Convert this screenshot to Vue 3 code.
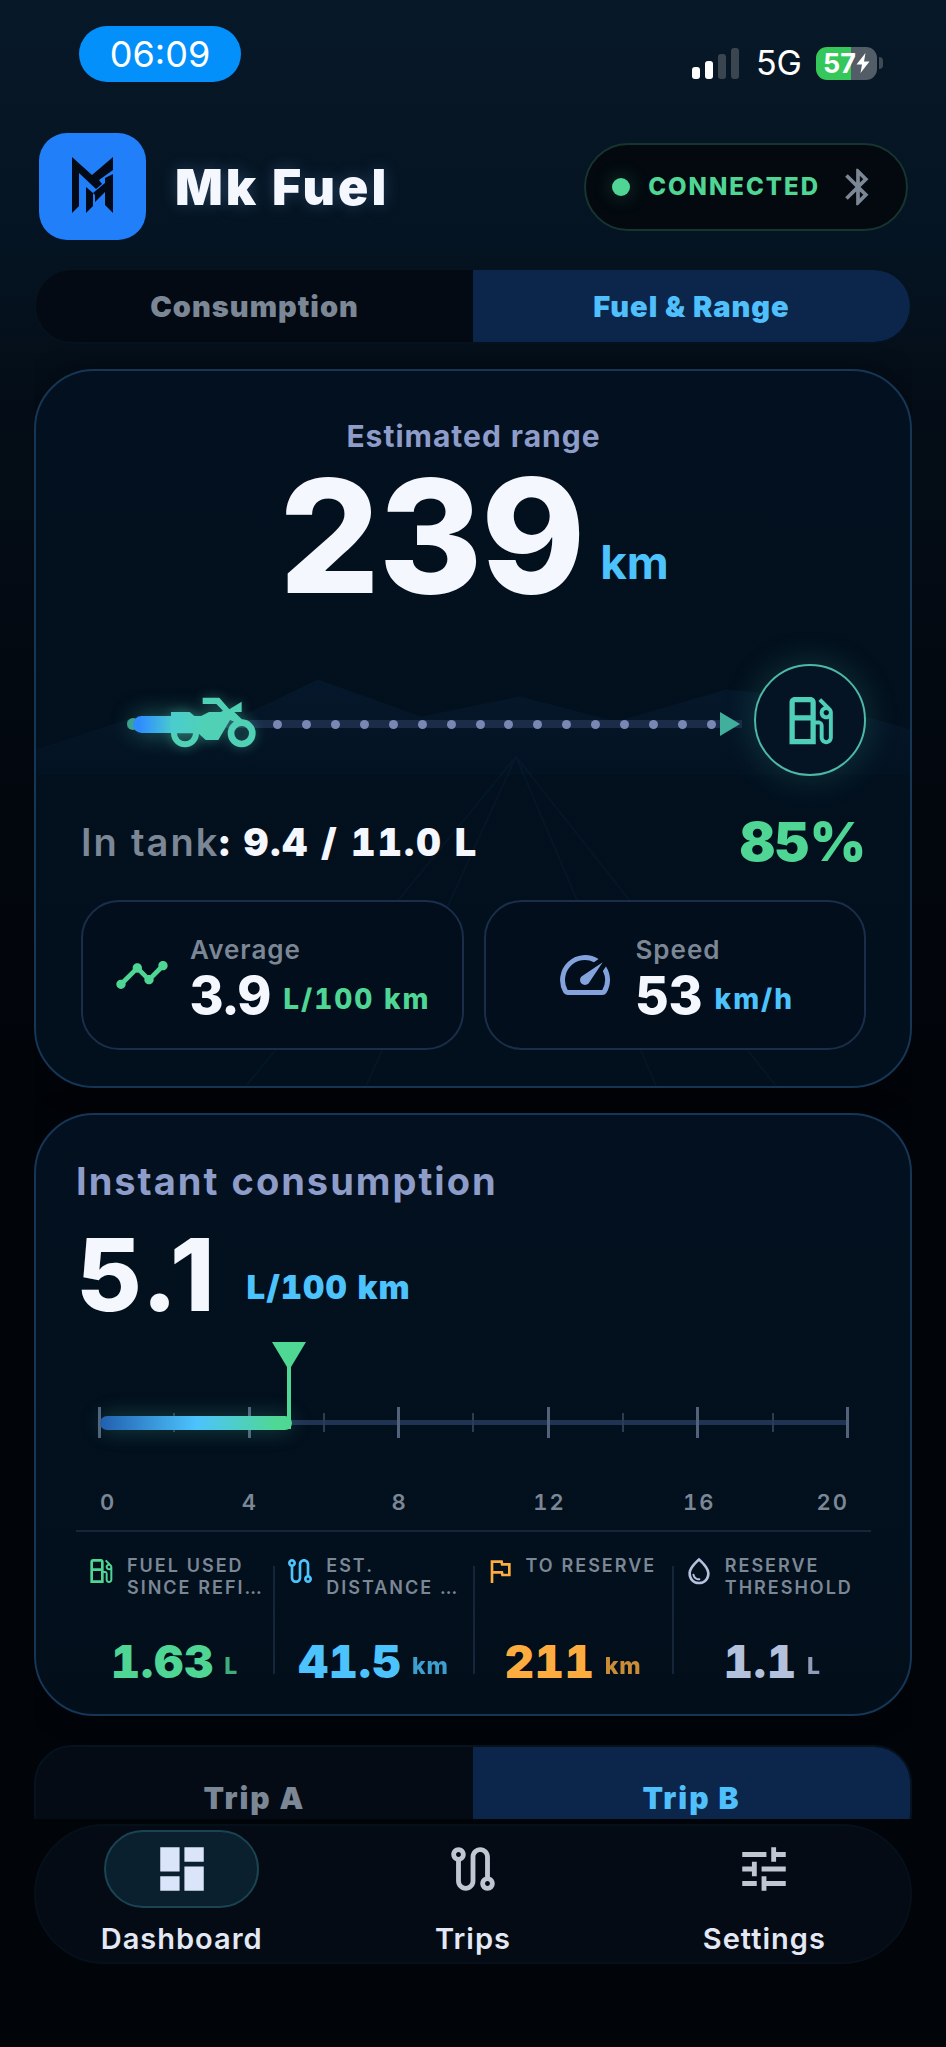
<script setup>
import { ref } from 'vue'

const icons = {
  bluetooth: 'M17.71 7.71L12 2h-1v7.59L6.41 5 5 6.41 10.59 12 5 17.59 6.41 19 11 14.41V22h1l5.71-5.71-4.3-4.29 4.3-4.29zM13 5.83l1.88 1.88L13 9.59V5.83zm1.88 10.46L13 18.17v-3.76l1.88 1.88z',
  pump: 'M19.77 7.23l.01-.01-3.72-3.72L15 4.56l2.11 2.11c-.94.36-1.61 1.26-1.61 2.33 0 1.38 1.12 2.5 2.5 2.5.36 0 .69-.08 1-.21v7.21c0 .55-.45 1-1 1s-1-.45-1-1V14c0-1.1-.9-2-2-2h-1V5c0-1.1-.9-2-2-2H6c-1.1 0-2 .9-2 2v16h10v-7.5h1.5v5c0 1.38 1.12 2.5 2.5 2.5s2.5-1.12 2.5-2.5V9c0-.69-.28-1.32-.73-1.77zM12 13.5V19H6v-7h6v1.5zm0-3.5H6V5h6v5zm6 0c-.55 0-1-.45-1-1s.45-1 1-1 1 .45 1 1-.45 1-1 1z',
  route: 'M19 15.18V7c0-2.21-1.79-4-4-4s-4 1.79-4 4v10c0 1.1-.9 2-2 2s-2-.9-2-2V8.82C8.16 8.4 9 7.3 9 6c0-1.66-1.34-3-3-3S3 4.34 3 6c0 1.3.84 2.4 2 2.82V17c0 2.21 1.79 4 4 4s4-1.79 4-4V7c0-1.1.9-2 2-2s2 .9 2 2v8.18c-1.16.41-2 1.51-2 2.82 0 1.66 1.34 3 3 3s3-1.34 3-3c0-1.3-.84-2.4-2-2.82zM6 7c-.55 0-1-.45-1-1s.45-1 1-1 1 .45 1 1-.45 1-1 1zm12 12c-.55 0-1-.45-1-1s.45-1 1-1 1 .45 1 1-.45 1-1 1z',
  flag: 'M12.36 6l.4 2H18v6h-3.36l-.4-2H7V6h5.36M14 4H5v17h2v-7h5.6l.4 2h7V6h-5.6L14 4z',
  drop: 'M12 2c-5.33 4.55-8 8.48-8 11.8 0 4.98 3.8 8.2 8 8.2s8-3.22 8-8.2c0-3.32-2.67-7.25-8-11.8zm0 18c-3.35 0-6-2.57-6-6.2 0-2.34 1.95-5.44 6-9.14 4.05 3.7 6 6.79 6 9.14 0 3.63-2.65 6.2-6 6.2zm-4.17-6c.37 0 .67.26.74.62.41 2.22 2.28 2.98 3.64 2.87.43-.02.79.32.79.75 0 .4-.32.73-.72.75-2.13.13-4.62-1.09-5.19-4.12-.08-.45.28-.87.74-.87z',
  timeline: 'M23 8c0 1.1-.9 2-2 2-.18 0-.35-.02-.51-.07l-3.56 3.55c.05.16.07.34.07.52 0 1.1-.9 2-2 2s-2-.9-2-2c0-.18.02-.36.07-.52l-2.55-2.55c-.16.05-.34.07-.52.07s-.36-.02-.52-.07l-4.55 4.56c.05.16.07.33.07.51 0 1.1-.9 2-2 2s-2-.9-2-2 .9-2 2-2c.18 0 .35.02.51.07l4.56-4.55C8.02 9.36 8 9.18 8 9c0-1.1.9-2 2-2s2 .9 2 2c0 .18-.02.36-.07.52l2.55 2.55c.16-.05.34-.07.52-.07s.36.02.52.07l3.55-3.56C19.02 8.35 19 8.18 19 8c0-1.1.9-2 2-2s2 .9 2 2z',
  speed: 'M20.38 8.57l-1.23 1.85a8 8 0 0 1-.22 7.58H5.07A8 8 0 0 1 15.58 6.85l1.85-1.23A10 10 0 0 0 3.35 19a2 2 0 0 0 1.72 1h13.85a2 2 0 0 0 1.74-1 10 10 0 0 0-.27-10.44zm-9.79 6.84a2 2 0 0 0 2.83 0l5.66-8.49-8.49 5.66a2 2 0 0 0 0 2.83z',
  dashboard: 'M3 13h8V3H3v10zm0 8h8v-6H3v6zm10 0h8V11h-8v10zm0-18v6h8V3h-8z',
  tune: 'M3 17v2h6v-2H3zM3 5v2h10V5H3zm10 16v-2h8v-2h-8v-2h-2v6h2zM7 9v2H3v2h4v2h2V9H7zm14 4v-2H11v2h10zm-6-4h2V7h4V5h-4V3h-2v6z',
}

const view = ref('range')
const trip = ref('b')
const page = ref('dashboard')

const gaugeMax = 20
const instant = 5.1
const gaugePercent = (instant / gaugeMax) * 100 + '%'
const gaugeLabels = [0, 4, 8, 12, 16, 20]

const stats = [
  { icon: 'pump', label: 'FUEL USED\nSINCE REFI…', value: '1.63', unit: 'L', tone: 'green' },
  { icon: 'route', label: 'EST.\nDISTANCE …', value: '41.5', unit: 'km', tone: 'blue' },
  { icon: 'flag', label: 'TO RESERVE', value: '211', unit: 'km', tone: 'amber' },
  { icon: 'drop', label: 'RESERVE\nTHRESHOLD', value: '1.1', unit: 'L', tone: 'pale' },
]

const pages = [
  { id: 'dashboard', icon: 'dashboard', label: 'Dashboard' },
  { id: 'trips', icon: 'route', label: 'Trips' },
  { id: 'settings', icon: 'tune', label: 'Settings' },
]
</script>

<template>
  <div class="app">
    <div class="content">
      <div class="status">
        <span class="clock">06:09</span>
        <div class="system">
          <svg class="signal" viewBox="0 0 48 31" aria-hidden="true">
            <rect x="0" y="19" width="8" height="12" rx="3" fill="#fff" />
            <rect x="13" y="13" width="8" height="18" rx="3" fill="#fff" />
            <rect x="26" y="6" width="8" height="25" rx="3" fill="#3a4550" />
            <rect x="39" y="0" width="8" height="31" rx="3" fill="#3a4550" />
          </svg>
          <span class="network">5G</span>
          <span class="battery">
            <span class="battery-body">
              57
              <svg class="bolt" viewBox="0 0 14 22" aria-hidden="true"><path d="M9.500 1 0.500 12.500H6L4.500 21 13.500 9.500H8z" fill="#fff" /></svg>
            </span>
            <span class="battery-cap"></span>
          </span>
        </div>
      </div>

      <header class="header">
        <svg class="logo" viewBox="0 0 107 107" aria-hidden="true">
          <rect width="107" height="107" rx="28" fill="#207ff9" />
          <g fill="#020a18">
            <path d="M33 24 53 42 74 24V37L60 47 63 51 57 56 40 40V73L33 80z" />
            <path d="M47 54 54 60V73L47 80z" />
            <path d="M74 41V80L66 72V59L56 69V62L54 60 66 50V45z" />
          </g>
        </svg>
        <h1 class="title">Mk Fuel</h1>
        <div class="connection">
          <span class="dot"></span>
          <span>CONNECTED</span>
          <svg class="bluetooth" viewBox="0 0 24 24" aria-hidden="true"><path :d="icons.bluetooth" /></svg>
        </div>
      </header>

      <div class="tabs" role="tablist">
        <button type="button" role="tab" :aria-selected="view === 'consumption'" :class="{ active: view === 'consumption' }" @click="view = 'consumption'">Consumption</button>
        <button type="button" role="tab" :aria-selected="view === 'range'" :class="{ active: view === 'range' }" @click="view = 'range'">Fuel &amp; Range</button>
      </div>

      <section class="card range-card">
        <svg class="scenery" viewBox="0 0 874 714" preserveAspectRatio="none" aria-hidden="true">
          <defs>
            <linearGradient id="hill" x1="0" y1="0" x2="0" y2="1">
              <stop offset="0" stop-color="#0d3156" stop-opacity="0.240" />
              <stop offset="1" stop-color="#0d3156" stop-opacity="0.080" />
            </linearGradient>
          </defs>
          <path d="M0 378 110 342 205 345 282 308 385 345 484 325 580 350 690 318 760 325 874 358V404H0z" fill="url(#hill)" />
          <path d="M0 404H874V714H0z" fill="#0d3156" fill-opacity="0.050" />
          <path d="M480 385 210 714M480 385 330 714M480 385 620 714M480 385 740 714" fill="none" stroke="#2a5680" stroke-opacity="0.080" stroke-width="2" />
        </svg>

        <h2 class="range-title">Estimated range</h2>
        <div class="range-value">
          <span class="range-number">239</span>
          <span class="range-unit">km</span>
        </div>

        <div class="journey">
          <div class="track">
            <span class="track-start"></span>
            <span class="track-done"></span>
            <svg class="bike" viewBox="423 165 261 156" aria-hidden="true">
              <defs>
                <linearGradient id="bike-paint" gradientUnits="userSpaceOnUse" x1="426" y1="0" x2="530" y2="0">
                  <stop offset="0" stop-color="#4accd0" />
                  <stop offset="1" stop-color="#50d1b5" />
                </linearGradient>
              </defs>
              <g fill="none" stroke="#50d1b5">
                <circle cx="468" cy="277" r="33" stroke-width="18" />
                <circle cx="638" cy="277" r="32" stroke-width="20" />
              </g>
              <path d="M426 213H482L497 226H515L540 213H575L582 209 562 189H521V170H571L601 205 638 182V213H616L640 236 625 246 603 237 568 297H530L508 277H426z" fill="url(#bike-paint)" />
            </svg>
            <span class="dots"><i v-for="n in 16" :key="n"></i></span>
            <span class="arrow"></span>
          </div>
          <div class="destination">
            <svg viewBox="0 0 24 24" aria-hidden="true"><path :d="icons.pump" /></svg>
          </div>
        </div>

        <div class="tank">
          <span class="tank-level"><span class="muted">In tank</span>: 9.4 / 11.0 L</span>
          <span class="tank-percent">85%</span>
        </div>

        <div class="tiles">
          <div class="tile">
            <svg class="timeline" viewBox="0 0 24 24" aria-hidden="true"><path :d="icons.timeline" /></svg>
            <div>
              <div class="tile-label">Average</div>
              <div class="tile-value">3.9 <span class="tile-unit green">L/100 km</span></div>
            </div>
          </div>
          <div class="tile">
            <svg class="speed" viewBox="0 0 24 24" aria-hidden="true"><path :d="icons.speed" /></svg>
            <div>
              <div class="tile-label">Speed</div>
              <div class="tile-value">53 <span class="tile-unit blue">km/h</span></div>
            </div>
          </div>
        </div>
      </section>

      <section class="card instant-card">
        <h2 class="instant-title">Instant consumption</h2>
        <div class="instant-value">
          <span class="instant-number">5.1</span>
          <span class="instant-unit">L/100 km</span>
        </div>

        <div class="gauge">
          <span class="gauge-line"></span>
          <div class="ticks"><i v-for="n in 11" :key="n" :class="{ minor: n % 2 === 0 }"></i></div>
          <span class="gauge-fill" :style="{ width: gaugePercent }"></span>
          <svg class="marker" :style="{ left: gaugePercent }" viewBox="0 0 40 90" aria-hidden="true">
            <path d="M3 2H37L22 27V89H18V27z" fill="#4fd894" />
          </svg>
        </div>
        <div class="gauge-labels"><span v-for="n in gaugeLabels" :key="n">{{ n }}</span></div>

        <div class="stats">
          <template v-for="(s, i) in stats" :key="s.label">
            <span v-if="i" class="separator"></span>
            <div class="stat" :class="s.tone">
              <div class="stat-head">
                <svg viewBox="0 0 24 24" aria-hidden="true"><path :d="icons[s.icon]" /></svg>
                <span class="stat-label">{{ s.label }}</span>
              </div>
              <div class="stat-value">{{ s.value }}<span class="stat-unit">{{ s.unit }}</span></div>
            </div>
          </template>
        </div>
      </section>

      <div class="tabs trip-tabs" role="tablist">
        <button type="button" role="tab" :aria-selected="trip === 'a'" :class="{ active: trip === 'a' }" @click="trip = 'a'">Trip A</button>
        <button type="button" role="tab" :aria-selected="trip === 'b'" :class="{ active: trip === 'b' }" @click="trip = 'b'">Trip B</button>
      </div>
    </div>

    <nav class="nav">
      <button v-for="p in pages" :key="p.id" type="button" :class="{ active: page === p.id }" @click="page = p.id">
        <span class="nav-icon"><svg viewBox="0 0 24 24" aria-hidden="true"><path :d="icons[p.icon]" /></svg></span>
        <span>{{ p.label }}</span>
      </button>
    </nav>
  </div>
</template>

<style>
html,
body {
  margin: 0;
  background: #010409;
}
</style>

<style scoped>
* {
  box-sizing: border-box;
}
.app {
  height: 100vh;
  display: flex;
  flex-direction: column;
  overflow: hidden;
  padding: 0 34px 83px;
  color: #f4f7fe;
  font-family: Inter, "Liberation Sans", sans-serif;
  font-weight: 700;
  background: linear-gradient(180deg, #071828 0, #051422 240px, #040d17 400px, #02070e 800px, #010409 1100px);
}
button {
  border: 0;
  padding: 0;
  background: none;
  color: inherit;
  font: inherit;
  letter-spacing: inherit;
}
h1,
h2 {
  margin: 0;
}
svg {
  display: block;
  flex: none;
  fill: currentColor;
}
.content {
  flex: 1;
  min-height: 0;
  overflow: hidden;
}

.status {
  display: flex;
  justify-content: space-between;
  align-items: flex-end;
  padding: 26px 29px 0 45px;
}
.clock {
  width: 162px;
  border-radius: 28px;
  background: #0490fb;
  color: #fff;
  text-align: center;
  font-size: 36px;
  font-weight: 400;
  line-height: 56px;
}
.system {
  display: flex;
  align-items: center;
  padding-bottom: 2px;
}
.signal {
  width: 48px;
  height: 31px;
}
.network {
  margin: 0 14px 0 16px;
  color: #fff;
  font-size: 34px;
  font-weight: 400;
  line-height: 34px;
}
.battery {
  display: flex;
  align-items: center;
  gap: 2px;
}
.battery-body {
  display: flex;
  align-items: center;
  justify-content: center;
  width: 61px;
  border-radius: 11px;
  background: linear-gradient(90deg, #35c759 58%, #535d68 58%);
  color: #fff;
  font-size: 27px;
  line-height: 33px;
}
.bolt {
  width: 14px;
  height: 22px;
}
.battery-cap {
  width: 4px;
  height: 12px;
  border-radius: 0 4px 4px 0;
  background: #3f4a55;
}

.header {
  display: flex;
  align-items: center;
  margin-top: 51px;
  padding: 0 4px 0 5px;
}
.logo {
  width: 107px;
  height: 107px;
}
.title {
  margin-left: 29px;
  font-size: 50px;
  font-weight: 900;
  line-height: 60px;
  letter-spacing: 3px;
  text-shadow: 0 0 16px rgba(120, 170, 240, 0.25);
}
.connection {
  display: flex;
  align-items: center;
  height: 88px;
  margin-left: auto;
  padding: 0 26px;
  border: 2px solid #16352f;
  border-radius: 44px;
  background: #03090f;
  color: #4fd594;
  font-size: 24px;
  font-weight: 800;
  letter-spacing: 2px;
}
.dot {
  width: 18px;
  height: 18px;
  margin-right: 18px;
  border-radius: 50%;
  background: #4fd594;
  box-shadow: 0 0 20px rgba(79, 213, 148, 0.3);
}
.bluetooth {
  width: 44px;
  height: 46px;
  margin-left: 16px;
  color: #7c8796;
}

.tabs {
  display: flex;
  height: 76px;
  margin-top: 28px;
  overflow: hidden;
  border: 2px solid #06121d;
  border-radius: 38px;
  background: #030a13;
  color: #7c8796;
  font-size: 29px;
  font-weight: 900;
  letter-spacing: 1px;
}
.tabs button {
  flex: 1;
}
.tabs .active {
  background: #0b264a;
  color: #50c0fc;
}

.card {
  position: relative;
  border: 2px solid #163656;
  border-radius: 60px;
  background: linear-gradient(180deg, #03101f, #020f1b);
  box-shadow: 0 0 24px rgba(0, 0, 0, 0.5);
  font-variant-numeric: tabular-nums;
}
.range-card {
  margin-top: 25px;
  padding: 47px 44px 36px 45px;
  overflow: hidden;
}
.scenery {
  position: absolute;
  inset: 0;
  width: 100%;
  height: 100%;
}
.range-card > :not(.scenery) {
  position: relative;
}
.range-title {
  color: #8d9cc8;
  font-size: 30px;
  font-weight: 700;
  line-height: 36px;
  letter-spacing: 1px;
  text-align: center;
}
.range-value {
  display: flex;
  justify-content: center;
  align-items: flex-end;
  gap: 16px;
  margin-top: 18px;
}
.range-number {
  font-size: 158px;
  font-weight: 800;
  line-height: 128px;
}
.range-unit {
  margin-bottom: 16px;
  color: #4cc3fd;
  font-size: 46px;
  line-height: 44px;
}

.journey {
  display: flex;
  align-items: center;
  gap: 12px;
  margin-top: 64px;
}
.track {
  position: relative;
  display: flex;
  justify-content: flex-end;
  align-items: center;
  flex: 1;
  height: 60px;
  margin: 8px 0 0 46px;
  background: linear-gradient(#1a2c48, #1a2c48) center / 100% 8px no-repeat;
}
.track-start,
.track-done,
.bike {
  position: absolute;
}
.track-start {
  left: 0;
  width: 12px;
  height: 12px;
  border-radius: 50%;
  background: #3a9f8b;
}
.track-done {
  left: 1%;
  width: 11%;
  height: 17px;
  border-radius: 9px 0 0 9px;
  background: linear-gradient(90deg, #2f8dff 10%, #4accd0 60%);
  box-shadow: 0 0 24px rgba(79, 209, 181, 0.45);
}
.bike {
  left: 7%;
  top: 2px;
  width: 87px;
  height: 52px;
  filter: drop-shadow(0 0 6px rgba(79, 209, 181, 0.4));
}
.dots {
  display: flex;
  justify-content: space-between;
  width: 72%;
}
.dots i {
  width: 9px;
  height: 9px;
  border-radius: 50%;
  background: #7888b2;
}
.arrow {
  margin: 0 2px 0 4px;
  border: solid transparent;
  border-width: 12px 0 12px 20px;
  border-left-color: #40b09d;
}
.destination {
  display: flex;
  align-items: center;
  justify-content: center;
  width: 112px;
  height: 112px;
  border: 2px solid #4cb8a5;
  border-radius: 50%;
  background: #051424;
  color: #50cfb8;
  box-shadow: 0 0 36px rgba(79, 209, 181, 0.2);
}
.destination svg {
  width: 63px;
  height: 63px;
}

.tank {
  display: flex;
  justify-content: space-between;
  align-items: center;
  margin-top: 38px;
  line-height: 56px;
}
.tank-level {
  font-size: 38px;
  font-weight: 900;
  letter-spacing: 2px;
  word-spacing: normal;
}
.muted {
  color: #7c8796;
  font-weight: 600;
}
.tank-percent {
  color: #4fd594;
  font-size: 54px;
  font-weight: 900;
}

.tiles {
  display: grid;
  grid-template-columns: 1fr 1fr;
  gap: 20px;
  margin-top: 30px;
}
.tile {
  display: flex;
  align-items: center;
  justify-content: center;
  gap: 20px;
  height: 150px;
  border: 2px solid #1a2d4a;
  border-radius: 38px;
  background: #020e1b;
}
.timeline {
  width: 56px;
  height: 56px;
  color: #4fd594;
}
.speed {
  width: 60px;
  height: 60px;
  color: #84a3dc;
}
.tile-label {
  margin: 3px 0 4px;
  color: #7c8796;
  font-size: 26px;
  font-weight: 600;
  line-height: 34px;
  letter-spacing: 1px;
}
.tile-value {
  display: flex;
  align-items: flex-end;
  gap: 12px;
  font-size: 52px;
  font-weight: 800;
  line-height: 50px;
}
.tile-unit {
  margin-bottom: 8px;
  font-size: 28px;
  line-height: 28px;
  letter-spacing: 2px;
}
.green {
  color: #4fd594;
}
.blue {
  color: #4cc3fd;
}
.amber {
  color: #fdac3f;
}
.pale {
  color: #b4c1dd;
}

.instant-card {
  margin-top: 25px;
  padding: 43px 39px 28px 40px;
}
.instant-title {
  color: #8d9cc8;
  font-size: 38px;
  font-weight: 700;
  line-height: 46px;
  letter-spacing: 2px;
}
.instant-value {
  display: flex;
  align-items: flex-end;
  gap: 30px;
  margin-top: 26px;
}
.instant-number {
  font-size: 101px;
  font-weight: 800;
  line-height: 88px;
  letter-spacing: 2px;
  font-variant-numeric: normal;
}
.instant-unit {
  margin-bottom: 14px;
  color: #4cc3fd;
  font-size: 33px;
  font-weight: 900;
  line-height: 34px;
  letter-spacing: 1px;
}

/* The scale spans 0 to 20, with the marker standing above the line. */
.gauge {
  position: relative;
  display: flex;
  align-items: flex-end;
  height: 98px;
  margin: 22px 22px 0;
}
.gauge-line,
.gauge-fill,
.marker {
  position: absolute;
}
.gauge-line {
  bottom: 13px;
  width: 100%;
  height: 5px;
  background: #203352;
}
.ticks {
  display: flex;
  flex: 1;
  justify-content: space-between;
  align-items: center;
  height: 31px;
  z-index: 1;
}
.ticks i {
  width: 3px;
  height: 31px;
  background: #52627b;
}
.ticks .minor {
  width: 2px;
  height: 19px;
  background: #2c3c52;
}
.gauge-fill {
  z-index: 1;
  bottom: 8px;
  left: 2px;
  height: 14px;
  border-radius: 7px;
  background: linear-gradient(90deg, #215fae, #4cc3fd 50%, #4fd894 92%);
  box-shadow: 0 0 22px rgba(79, 209, 181, 0.3);
}
.marker {
  z-index: 1;
  top: 0;
  width: 40px;
  height: 90px;
  margin-left: -21px;
}
.gauge-labels {
  display: grid;
  grid-template-columns: 1fr 2fr 2fr 2fr 2fr 1fr;
  margin: 52px 22px 16px 24px;
  color: #7c8796;
  font-size: 22px;
  font-weight: 600;
  line-height: 24px;
  letter-spacing: 2px;
  text-align: center;
}
.gauge-labels :first-child {
  text-align: left;
}
.gauge-labels :last-child {
  text-align: right;
}

.stats {
  display: flex;
  padding-top: 23px;
  border-top: 2px solid #15263b;
}
.separator {
  width: 2px;
  margin: 11px 0 13px;
  background: #15263b;
}
.stat {
  flex: 1;
  min-width: 0;
}
.stat-head {
  display: flex;
  gap: 10px;
  height: 44px;
  padding-left: 9px;
}
.stat-head svg {
  width: 32px;
  height: 32px;
}
.stat-label {
  color: #7c8796;
  font-size: 18px;
  font-weight: 600;
  line-height: 22px;
  letter-spacing: 2px;
  white-space: pre;
}
.stat-value {
  display: flex;
  justify-content: center;
  align-items: flex-end;
  gap: 10px;
  margin-top: 38px;
  font-size: 45px;
  font-weight: 900;
  line-height: 50px;
  letter-spacing: 1px;
}
.stat-unit {
  margin-bottom: 9px;
  opacity: 0.8;
  font-size: 23px;
  font-weight: 800;
  line-height: 24px;
}
.instant-card .stats {
  margin-bottom: -1px;
}

.trip-tabs {
  height: 106px;
  margin-top: 29px;
  background: #040b15;
  font-size: 30px;
  letter-spacing: 2px;
}

.nav {
  display: flex;
  flex: none;
  height: 140px;
  margin-top: 5px;
  padding-top: 4px;
  border: 2px solid #06101b;
  border-radius: 70px;
  background: #040b14;
  color: #e3e8f4;
  font-size: 29px;
  font-weight: 600;
  line-height: 36px;
  letter-spacing: 1px;
}
.nav button {
  display: flex;
  flex: 1;
  flex-direction: column;
  align-items: center;
  gap: 13px;
}
.nav-icon {
  display: flex;
  align-items: center;
  justify-content: center;
  width: 155px;
  height: 78px;
  border: 2px solid transparent;
  border-radius: 39px;
  color: #c0c6d2;
}
.nav .active .nav-icon {
  border-color: #1a4452;
  background: #0b202e;
  color: #dbe5fa;
}
.nav-icon svg {
  width: 58px;
  height: 58px;
}
</style>
